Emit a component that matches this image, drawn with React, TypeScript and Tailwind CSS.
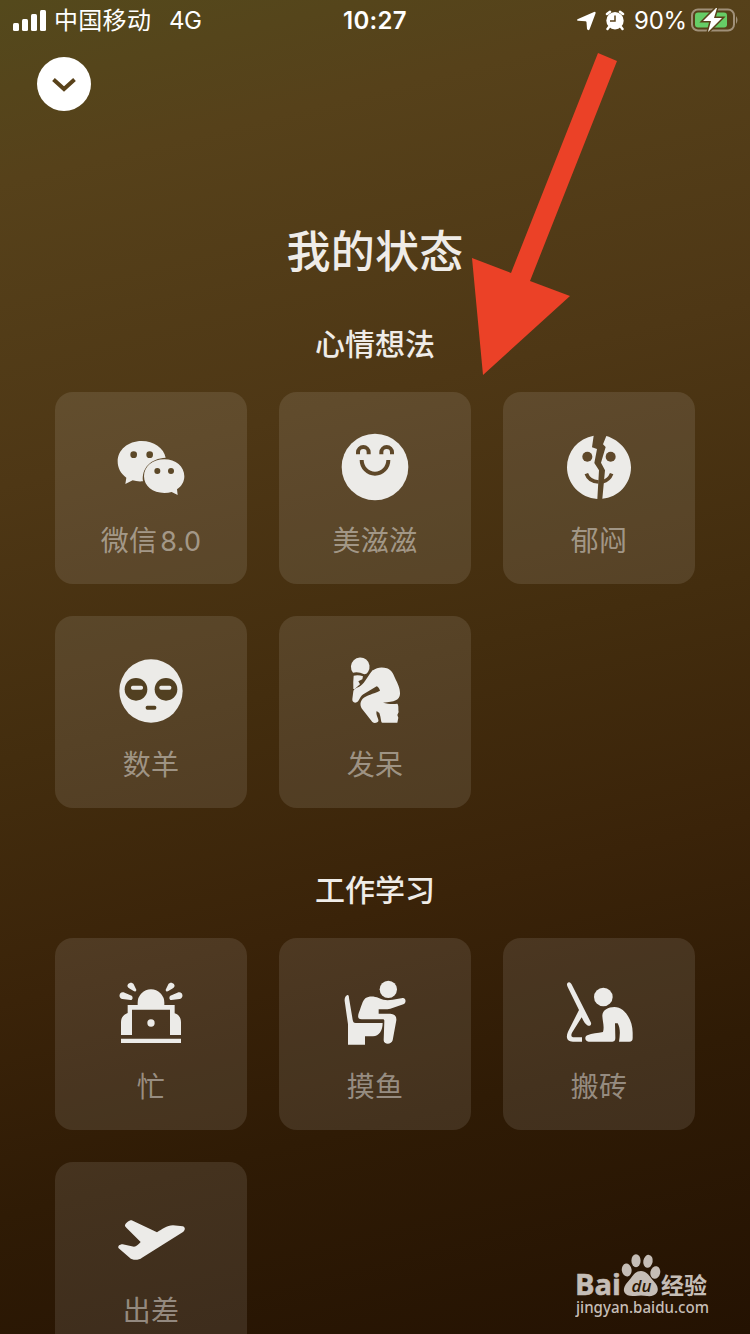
import React from "react";

type StatusItem = {
  label: string;
  suffix?: string;
  viewBox: string;
  icon: React.ReactNode;
};

type StatusGroup = {
  title: string;
  items: StatusItem[];
};

const GROUPS: StatusGroup[] = [
  {
    title: "心情想法",
    items: [
      {
        label: "微信",
        suffix: "8.0",
        viewBox: "3 0 300 270",
        icon: (
          <>
            <path d="M125 63C84 63 53 90 53 124c0 20 9 37 26 49l-3 19 22-11c9 3 19 4 31 3-5-39 23-69 68-71C192 84 161 63 125 63Z" />
            <path d="M193 118c-35 0-61 22-61 51s26 50 61 50c8 0 15-1 22-3l18 9-2-17c14-9 22-23 22-39 0-29-26-51-60-51Z" />
            <g fill="#5c4828">
              <circle cx="101" cy="104" r="10" />
              <circle cx="149" cy="104" r="10" />
              <circle cx="172" cy="153" r="9" />
              <circle cx="213" cy="153" r="9" />
            </g>
          </>
        ),
      },
      {
        label: "美滋滋",
        viewBox: "0 0 300 270",
        icon: (
          <>
            <circle cx="150" cy="141" r="100" />
            <g fill="none" stroke="#5e4728" strokeWidth="12">
              <path d="M99 103V97a16 16 0 0 1 32 0V103M169 103V97a16 16 0 0 1 32 0V103" />
              <path d="M110 120a40 41 0 0 0 80 0" />
            </g>
          </>
        ),
      },
      {
        label: "郁闷",
        viewBox: "-3 0 300 270",
        icon: (
          <>
            <path d="M131 47A96 96 0 0 0 51 142c0 50 40 92 91 95l5-86-14-22 8-42-15-5Z" />
            <path d="M169 48l-10 25 8 8-14 47 12 23-8 85c47-3 86-43 86-94 0-43-32-82-74-94Z" />
            <g fill="#5f482a">
              <circle cx="112" cy="110" r="15" />
              <circle cx="182" cy="110" r="15" />
            </g>
            <path
              d="M109 161c5 15 18 24 37 25M185 161c-5 13-14 21-27 24"
              fill="none"
              stroke="#5f482a"
              strokeWidth="11"
            />
          </>
        ),
      },
      {
        label: "数羊",
        viewBox: "3 -3 300 270",
        icon: (
          <>
            <circle cx="153" cy="138" r="95" />
            <g fill="#524021">
              <circle cx="108" cy="133" r="34" />
              <circle cx="198" cy="133" r="34" />
              <rect x="137" y="182" width="32" height="12" rx="5" />
            </g>
            <rect x="93" y="122" width="36" height="12" rx="5" />
            <rect x="178" y="122" width="36" height="12" rx="5" />
          </>
        ),
      },
      {
        label: "发呆",
        viewBox: "0 -3 300 270",
        icon: (
          <>
            <path d="M84 83a28 28 0 1 1 45-2q-4 7-11 7-18-9-34-5Z" />
            <path d="M86 92q14-4 28 2l-2 9-12 6 5 9-16 14h-4Q84 110 86 92Z" />
            <path d="M144 76C155 67 171 65 186 70c14 5 19 17 24 29 7 15 16 31 15 48-1 18-16 24-51 26 16 5 33 4 43 3 5 5 2 17 4 25l-4 9 3 8-3 15h-45c-5 0-3-13-9-29l-8-6c-4 12 8 25 5 31-4 6-13 7-18 2l-30-38c-8-12-7-22 1-32 12-11 31-14 52-24-2-7-6-12-10-13l-40 24c-12 8-12 21-20 24-8 3-14-2-13-10l3-23c2-9 12-10 21-16 15-11 25-35 38-49Z" />
          </>
        ),
      },
    ],
  },
  {
    title: "工作学习",
    items: [
      {
        label: "忙",
        viewBox: "3 -12 300 270",
        icon: (
          <>
            <path d="M113 105V98a40 40 0 0 1 80 0v7h31v25c13 4 19 14 19 27v38h-33v-76H96v76H63v-38c0-14 7-23 20-28v-24Z" />
            <circle cx="153" cy="159" r="11" />
            <path d="M63 206h180v13H63Z" />
            <path d="M84 43c5-6 13-6 17 0l8 16c0 5-4 7-8 4L86 54c-4-3-5-7-2-11ZM61 70c3-4 8-4 13-2l21 9c5 4 3 14-3 13l-25-3c-8-1-11-10-6-17ZM222 43c-5-6-13-6-17 0l-8 16c0 5 4 7 8 4l15-9c4-3 5-7 2-11ZM245 70c-3-4-8-4-13-2l-21 9c-5 4-3 14 3 13l25-3c8-1 11-10 6-17Z" />
          </>
        ),
      },
      {
        label: "摸鱼",
        viewBox: "0 -12 300 270",
        icon: (
          <>
            <circle cx="190" cy="58" r="26" />
            <path d="M59 93c-1-10 3-16 8-18 4-1 5 4 5 9l11 65c1 6 3 10 9 10h81c0 22-11 40-29 40h-24v25H69v-61Z" />
            <path d="M121 85c12-8 27-6 40-1 17 8 29 7 42 5l30-5c10-1 12 15 2 19l-39 13c-12 3-23 1-35 2v13h35c13 1 19 8 18 20l-11 60c-4 14-27 13-27 0l2-58c0-4-2-5-6-5h-62c-13 0-12-10-8-21 7-17 10-34 19-42Z" />
          </>
        ),
      },
      {
        label: "搬砖",
        viewBox: "-3 -12 300 270",
        icon: (
          <>
            <circle cx="160" cy="81" r="28" />
            <path d="M53 51c-4-8-2-13 4-14 4 0 7 4 10 10l55 109c4 8-1 13-8 11-7-3-12-10-19-25L66 188c-4 9-2 14 7 14h23v13H69c-19 0-22-13-15-30l33-65Z" />
            <path d="M157 136c1-16 18-25 36-25 31 0 55 39 55 77v16c0 8-3 11-10 11h-31c3-20 5-39-4-55h-8l1 43c0 9-3 12-12 12h-68c-11 0-14-15-4-19 14-7 31-6 47-10 5-17-2-34-2-50Z" />
          </>
        ),
      },
      {
        label: "出差",
        viewBox: "183 120 300 270",
        icon: (
          <path d="M255 226c2-7 11-15 20-15l76 36c15-9 29-21 48-21l29 3c8 2 9 11 1 17L306 323c-10 8-29 8-37 0l-33-28c-4-5 2-12 12-12l34 7c7 0 15-8 20-14l-43-43c-2-2-5-4-4-7Z" />
        ),
      },
    ],
  },
];

function StatusBar() {
  return (
    <div className="flex h-[42px] shrink-0 items-center text-2xl leading-[42px]">
      <svg className="-mt-[2px] ml-[13px] h-[21px] w-[33px]" viewBox="0 0 33 21" fill="white">
        <rect y="13" width="6" height="8" rx="1.5" />
        <rect x="9" y="9" width="6" height="12" rx="1.5" />
        <rect x="18" y="4" width="6" height="17" rx="1.5" />
        <rect x="27" y="0" width="6" height="21" rx="1.5" />
      </svg>
      <span className="ml-[8px] w-[115px] tracking-[0.3px]">中国移动</span>
      <span className="w-[174px] tracking-[-0.4px]">4G</span>
      <span className="w-[234px] font-semibold tracking-[0.3px]">10:27</span>
      <svg className="-mt-px h-[20px] w-[19px]" viewBox="0 0 19 20" fill="white">
        <path d="M17 1Q19 0 18.500 2.500L12.500 18.500Q11 20 10 18L9.500 11.200Q9.400 10.300 8.500 10.300L1 9.700Q-1 9 1 8Z" />
      </svg>
      <svg className="-mt-[2px] ml-[9px] h-[21px] w-[20px]" viewBox="0 0 20 21">
        <g stroke="white" strokeWidth="2.500" strokeLinecap="round" fill="none">
          <path d="M2 4l3-2.300M18 4l-3-2.300M4 17l-1.500 2M16 17l1.500 2" />
        </g>
        <circle cx="10" cy="10.700" r="8.700" fill="white" />
        <path d="M10 5.500v5.500H5" fill="none" stroke="#59421a" strokeWidth="1.500" />
      </svg>
      <span className="ml-[9px] w-[57px] tracking-[-0.2px]">90%</span>
      <svg className="-mt-[2px] h-[24px] w-[48px]" viewBox="0 0 48 24">
        <rect x="1" y="1.500" width="42" height="21" rx="6" fill="none" stroke="#a09079" strokeWidth="2" />
        <path d="M45 8q3 4 0 8Z" fill="#a09079" />
        <rect x="4" y="4.500" width="32" height="15" rx="3" fill="#66cd66" />
        <path
          d="M25 0L12 13h8l-3 11 14-14h-8l3-10Z"
          fill="white"
          stroke="#59421a"
          strokeWidth="3"
          paintOrder="stroke"
        />
      </svg>
    </div>
  );
}

function StatusCard({ item }: { item: StatusItem }) {
  return (
    <div className="flex h-48 w-48 flex-col items-center rounded-[18px] bg-white/10 pt-7">
      <svg className="h-[90px] w-[100px] shrink-0" viewBox={item.viewBox} fill="#ecebe8">
        {item.icon}
      </svg>
      <span className="pt-px text-[28px] leading-[60px] tracking-[0.3px] text-white/45">
        {item.label}
        {item.suffix && <span className="ml-[3px] text-[27px]">{item.suffix}</span>}
      </span>
    </div>
  );
}

function Watermark() {
  return (
    <div className="absolute left-[575px] top-[1252px] w-[140px] text-[#c5bdb6]">
      <svg className="h-[66px] w-[140px]" viewBox="0 0 140 66" fill="currentColor">
        <text
          x="0"
          y="43"
          fontFamily="Open Sans"
          fontSize="29"
          fontWeight="700"
          stroke="currentColor"
          strokeWidth="0.6"
          textLength="46"
          lengthAdjust="spacingAndGlyphs"
        >
          Bai
        </text>
        <ellipse cx="51.700" cy="18" rx="4.900" ry="6.500" transform="rotate(-8 51.700 18)" />
        <ellipse cx="61" cy="8.700" rx="4.600" ry="6.500" />
        <ellipse cx="73" cy="9.300" rx="4.700" ry="6.500" transform="rotate(10 73 9.300)" />
        <ellipse cx="80.300" cy="20.500" rx="4.900" ry="6.300" transform="rotate(12 80.300 20.500)" />
        <path d="M66 19c5 0 8 4 10 7l5 6c5 8-1 13-9 12q-6-1-12 0c-10 1-14-5-9-12l5-6c3-4 5-7 10-7Z" />
        <text
          x="56.500"
          y="39.500"
          fontFamily="Open Sans"
          fontSize="17"
          fontStyle="italic"
          fontWeight="600"
          fill="#2c1906"
          textLength="20"
          lengthAdjust="spacingAndGlyphs"
        >
          du
        </text>
        <text x="86" y="42" fontFamily="Noto Sans CJK SC" fontSize="23" fontWeight="700" textLength="46">
          经验
        </text>
        <text
          x="1"
          y="60.500"
          fontFamily="Noto Sans"
          fontSize="16"
          fontWeight="500"
          textLength="133"
          lengthAdjust="spacingAndGlyphs"
        >
          jingyan.baidu.com
        </text>
      </svg>
    </div>
  );
}

export default function App() {
  return (
    <div className="relative flex h-[1334px] w-[750px] flex-col overflow-hidden bg-[linear-gradient(166deg,#54491c_0%,#56411a_12%,#4e3715_32%,#432d0e_50%,#3a2309_66%,#2f1b05_80%,#241202_100%)] font-[Inter,'Noto_Sans_CJK_SC',sans-serif] text-white">
      <StatusBar />
      <div className="ml-[37px] mt-[15px] flex h-[54px] w-[54px] shrink-0 items-center justify-center rounded-full bg-white">
        <svg className="h-6 w-6" viewBox="0 0 24 24" fill="none" stroke="#59421a" strokeWidth="4">
          <path d="M1.500 7.500L12 17 22.500 7.500" />
        </svg>
      </div>
      <h1 className="mt-[111px] h-[60px] shrink-0 text-center text-[44px] font-medium leading-[60px] tracking-[0.3px] text-[#efece8]">
        我的状态
      </h1>
      {GROUPS.map((group) => (
        <section key={group.title} className="mb-5 shrink-0 pt-[42px]">
          <h2 className="h-10 text-center text-[30px] font-medium leading-10 text-[#efece8]">
            {group.title}
          </h2>
          <div className="ml-[55px] mt-7 grid w-[640px] grid-cols-3 gap-8">
            {group.items.map((item) => (
              <StatusCard key={item.label} item={item} />
            ))}
          </div>
        </section>
      ))}

      {/* Pointer arrow */}
      <svg className="absolute left-[460px] top-[45px] h-[340px] w-[170px]" viewBox="460 45 170 340" fill="#eb4127">
        <path d="M598 53L617 61 530 281 570 296 483 375 472 258 511 273Z" />
      </svg>
      <Watermark />
    </div>
  );
}
